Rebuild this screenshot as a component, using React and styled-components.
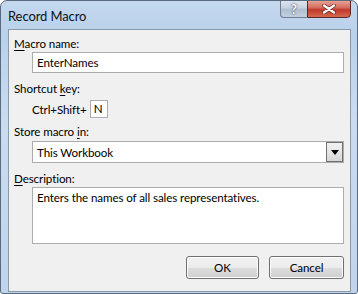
import React from 'react'
import styled, { createGlobalStyle } from 'styled-components'

const Global = createGlobalStyle`
html, body {
    margin: 0;
    padding: 0;
    background: #ffffff;
}
body {
    font-family: Lato, "Liberation Sans", sans-serif;
    font-size: 11.6px;
    letter-spacing: -0.1px;
    color: #000;
}
`

function App() {
    return (
        <>
            <Global />
            <Window>
                <TitleBar>
                    <Title>Record Macro</Title>
                    <Controls>
                        <HelpButton>?</HelpButton>
                        <CloseButton>
                            <svg width="14" height="10" viewBox="0 0 14 10">
                                <path d="M2 1.5 L12 8.5 M12 1.5 L2 8.5" stroke="#5a1e18" strokeWidth="3.6" strokeLinecap="round" />
                                <path d="M2 1.5 L12 8.5 M12 1.5 L2 8.5" stroke="#ffffff" strokeWidth="2.4" strokeLinecap="round" />
                            </svg>
                        </CloseButton>
                    </Controls>
                </TitleBar>
                <Panel>
                    <Label top={6}><u>M</u>acro name:</Label>
                    <TextBox top={1} value="EnterNames" readOnly />
                    <Label top={8}>Shortcut <u>k</u>ey:</Label>
                    <ShortcutRow>
                        <span>Ctrl+Shift+</span>
                        <KeyBox>N</KeyBox>
                    </ShortcutRow>
                    <Label top={6}>Store macro <u>i</u>n:</Label>
                    <Select>
                        <span>This Workbook</span>
                        <DropButton>
                            <svg width="8" height="5" viewBox="0 0 8 5">
                                <path d="M0 0 H8 L4 5 Z" fill="#000" />
                            </svg>
                        </DropButton>
                    </Select>
                    <Label top={8}><u>D</u>escription:</Label>
                    <TextArea>Enters the names of all sales representatives.</TextArea>
                    <ButtonRow>
                        <Button width={73}>OK</Button>
                        <Button width={75}>Cancel</Button>
                    </ButtonRow>
                </Panel>
            </Window>
        </>
    )
}

export default App

const Window = styled.div`
width: 358px;
height: 294px;
box-sizing: border-box;
border: 1px solid #5a6b80;
border-radius: 7px 7px 3px 3px;
background: linear-gradient(180deg, #c4d8ee 0%, #b9d1eb 12%, #c9dcf0 40%, #bfd4ec 100%);
display: flex;
flex-direction: column;
overflow: hidden;
`
const TitleBar = styled.div`
height: 28px;
display: flex;
align-items: flex-start;
justify-content: space-between;
padding-left: 7px;
`
const Title = styled.div`
font-size: 13px;
margin-top: 7px;
color: #111;
`
const Controls = styled.div`
display: flex;
margin-right: 6px;
margin-top: -1px;
`
const HelpButton = styled.div`
width: 27px;
height: 18px;
box-sizing: border-box;
border: 1px solid #6d7d92;
border-right: none;
border-radius: 0 0 0 4px;
background: linear-gradient(180deg, #dbe3ee 0%, #c7d2df 45%, #aebdcf 50%, #c3d0df 100%);
color: #fff;
font-weight: bold;
font-size: 13px;
display: flex;
align-items: center;
justify-content: center;
text-shadow: 0 0 2px #4a5a70, 0 0 1px #4a5a70;
`
const CloseButton = styled.div`
width: 44px;
height: 18px;
box-sizing: border-box;
border: 1px solid #5b2a28;
border-radius: 0 0 4px 0;
background: linear-gradient(180deg, #e8a092 0%, #d47062 40%, #c0392b 55%, #d46a50 100%);
display: flex;
align-items: center;
justify-content: center;
`
const Panel = styled.div`
flex: 1;
margin: 0 6px 1px 7px;
border: 1px solid #8899aa;
background: #f0f0f0;
display: flex;
flex-direction: column;
padding: 0 6px 0 5px;
`
const Label = styled.div`
height: 15px;
line-height: 15px;
margin-top: ${props => props.top}px;
u {
    text-decoration-thickness: 1px;
    text-underline-offset: 2px;
}
`
const TextBox = styled.input`
margin: ${props => props.top}px 0 0 18px;
height: 21px;
box-sizing: border-box;
border: 1px solid #acacac;
background: #fff;
font: inherit;
letter-spacing: inherit;
padding: 0 4px;
outline: none;
`
const ShortcutRow = styled.div`
display: flex;
align-items: center;
margin: 4px 0 0 18px;
gap: 3px;
`
const KeyBox = styled.div`
width: 18px;
height: 18px;
box-sizing: border-box;
border: 1px solid #acacac;
background: #fff;
padding-left: 3px;
line-height: 16px;
`
const Select = styled.div`
margin: 2px 0 0 18px;
height: 22px;
box-sizing: border-box;
border: 1px solid #acacac;
background: #fff;
display: flex;
align-items: center;
justify-content: space-between;
padding-left: 4px;
`
const DropButton = styled.div`
width: 17px;
height: 20px;
box-sizing: border-box;
border: 1px solid #707070;
background: linear-gradient(180deg, #f2f2f2 0%, #e6e6e6 50%, #d6d6d6 100%);
display: flex;
align-items: center;
justify-content: center;
`
const TextArea = styled.div`
margin: 1px 0 0 18px;
height: 57px;
box-sizing: border-box;
border: 1px solid #acacac;
background: #fff;
padding: 3px 4px;
`
const ButtonRow = styled.div`
display: flex;
justify-content: flex-end;
gap: 10px;
margin-top: 12px;
`
const Button = styled.div`
width: ${props => props.width}px;
height: 23px;
box-sizing: border-box;
border: 1px solid #707070;
border-radius: 3px;
background: linear-gradient(180deg, #f2f2f2 0%, #ebebeb 50%, #dddddd 51%, #cfcfcf 100%);
box-shadow: inset 0 0 0 1px #fcfcfc;
display: flex;
align-items: center;
justify-content: center;
`
